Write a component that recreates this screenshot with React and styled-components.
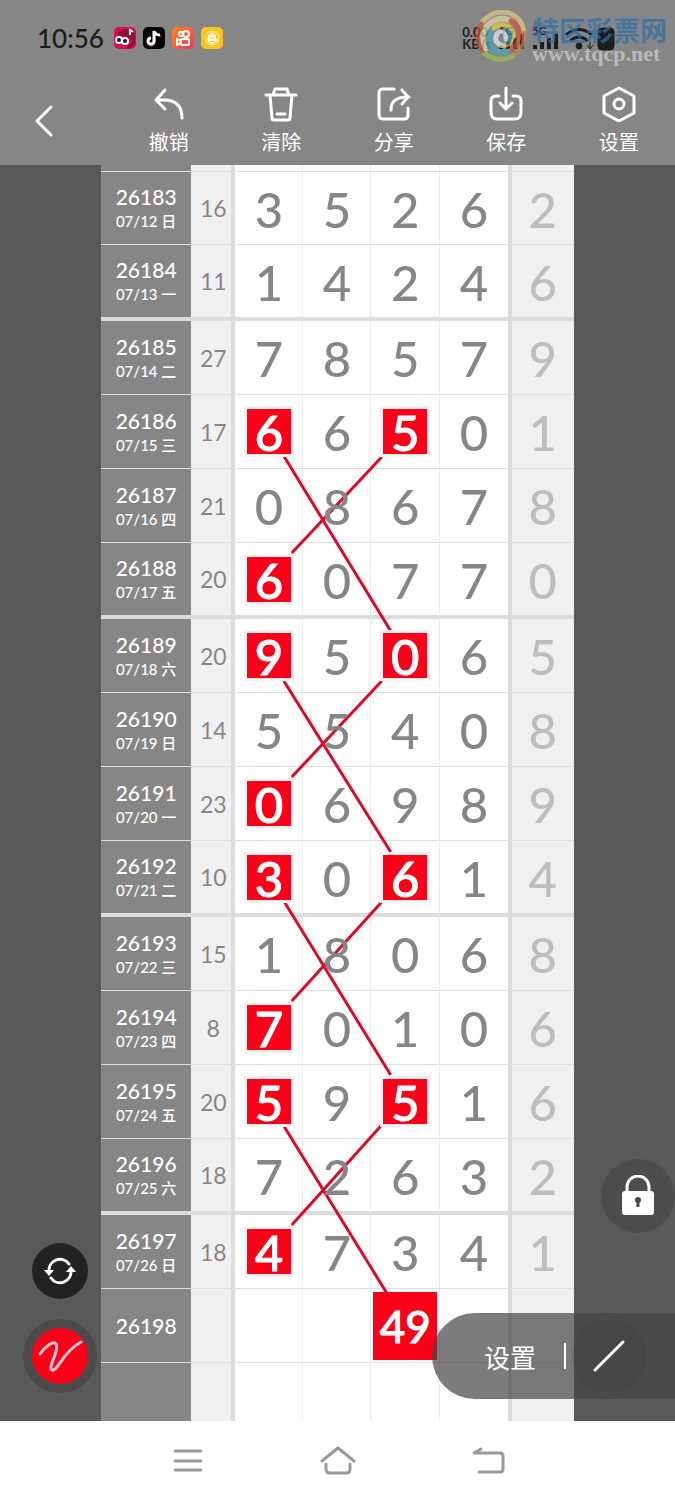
import React from "react";
import styled, { createGlobalStyle } from "styled-components";

const rows = [
  { issue: "26183", date: "07/12 日", sum: 16, nums: "3526", last: 2 },
  { issue: "26184", date: "07/13 一", sum: 11, nums: "1424", last: 6, thick: true },
  { issue: "26185", date: "07/14 二", sum: 27, nums: "7857", last: 9 },
  { issue: "26186", date: "07/15 三", sum: 17, nums: "6650", last: 1, marks: [0, 2] },
  { issue: "26187", date: "07/16 四", sum: 21, nums: "0867", last: 8 },
  { issue: "26188", date: "07/17 五", sum: 20, nums: "6077", last: 0, marks: [0], thick: true },
  { issue: "26189", date: "07/18 六", sum: 20, nums: "9506", last: 5, marks: [0, 2] },
  { issue: "26190", date: "07/19 日", sum: 14, nums: "5540", last: 8 },
  { issue: "26191", date: "07/20 一", sum: 23, nums: "0698", last: 9, marks: [0] },
  { issue: "26192", date: "07/21 二", sum: 10, nums: "3061", last: 4, marks: [0, 2], thick: true },
  { issue: "26193", date: "07/22 三", sum: 15, nums: "1806", last: 8 },
  { issue: "26194", date: "07/23 四", sum: 8, nums: "7010", last: 6, marks: [0] },
  { issue: "26195", date: "07/24 五", sum: 20, nums: "5951", last: 6, marks: [0, 2] },
  { issue: "26196", date: "07/25 六", sum: 18, nums: "7263", last: 2, thick: true },
  { issue: "26197", date: "07/26 日", sum: 18, nums: "4734", last: 1, marks: [0] },
];

// start and end of every drawn line, in board units
const lines = [
  [183, 291, 290, 466],
  [281, 292, 191, 388],
  [183, 516, 290, 687],
  [281, 516, 191, 612],
  [183, 736, 290, 910],
  [281, 737, 191, 836],
  [183, 961, 286, 1128],
  [281, 960, 191, 1060],
];

const tools = [
  {
    label: "撤销",
    icon: <path d="M13 4 4 14l9 9M4 14h8c12 0 18 6 18 18" />,
  },
  {
    label: "清除",
    icon: (
      <>
        <path d="M2 9h30M9 9l2-6h12l2 6M6 9l2 23q0 2 2 2h14q2 0 2-2l2-23" />
        <path d="M13 28h8" />
      </>
    ),
  },
  {
    label: "分享",
    icon: (
      <>
        <path d="M17 3H6q-4 0-4 4v21q0 5 4 5h21q4 0 4-4v-7" />
        <path d="M14 24c0-9 5-13 18-13M25 4l6 7-6 7" />
      </>
    ),
  },
  {
    label: "保存",
    icon: (
      <>
        <path d="M10 10H7q-5 0-5 5v11q0 7 6 7h18q6 0 6-7V15q0-5-5-5h-3" />
        <path d="M17 2v21M11 17l6 6 6-6" />
      </>
    ),
  },
  {
    label: "设置",
    icon: (
      <>
        <path d="M17 2 32 10v17l-15 8-15-8V10z" />
        <circle cx="17" cy="18" r="5" />
      </>
    ),
  },
];

const App = () => {
  return (
    <Page>
      <GlobalStyle />
      <Header>
        <StatusBar>
          <Clock>10:56</Clock>
          <AppIcons />
          <Spacer />
          <Speed>
            <span>0.00</span>
            <span>KB/s</span>
          </Speed>
          <Signals />
          <Watermark>
            <Swirl />
            <SiteName>特区彩票网</SiteName>
            <SiteUrl>www.tqcp.net</SiteUrl>
          </Watermark>
        </StatusBar>
        <Toolbar>
          <BackButton aria-label="返回">
            <svg width="20" height="34" viewBox="0 0 20 34">
              <path d="M17 3 3 17l14 14" />
            </svg>
          </BackButton>
          {tools.map((tool) => (
            <ToolButton key={tool.label}>
              <svg width="34" height="36" viewBox="0 0 34 36">
                {tool.icon}
              </svg>
              {tool.label}
            </ToolButton>
          ))}
        </Toolbar>
      </Header>

      <Board>
        <Sheet>
          <Table>
            <colgroup>
              <Col $width="19%" />
              <Col $width="9.4%" />
              <Col $width="14.4%" />
              <Col $width="14.4%" />
              <Col $width="14.5%" />
              <Col $width="15.2%" />
              <col />
            </colgroup>
            <tbody>
              <Row $height={7}>
                <IssueCell />
                <SumCell />
                {[0, 1, 2, 3].map((i) => (
                  <NumCell key={i} />
                ))}
                <LastCell />
              </Row>
              {rows.map((row, index) => (
                <Row
                  key={row.issue}
                  $height={row.thick ? 76 : index === 0 ? 73 : 74}
                  $thick={row.thick}
                >
                  <IssueCell>
                    <Issue>{row.issue}</Issue>
                    <DateText>{row.date}</DateText>
                  </IssueCell>
                  <SumCell>{row.sum}</SumCell>
                  {row.nums.split("").map((num, i) => (
                    <NumCell key={i}>
                      <Digit $marked={row.marks && row.marks.includes(i)}>
                        {num}
                      </Digit>
                    </NumCell>
                  ))}
                  <LastCell>
                    <Digit $faded>{row.last}</Digit>
                  </LastCell>
                </Row>
              ))}
              <Row $height={74}>
                <IssueCell>
                  <Issue>26198</Issue>
                </IssueCell>
                <SumCell />
                <NumCell />
                <NumCell />
                <NumCell>
                  <Guess>49</Guess>
                </NumCell>
                <NumCell />
                <LastCell />
              </Row>
              <Row $height={58} $open>
                <IssueCell />
                <SumCell />
                {[0, 1, 2, 3].map((i) => (
                  <NumCell key={i} />
                ))}
                <LastCell />
              </Row>
            </tbody>
          </Table>
          <Drawing viewBox="0 0 473 1256" preserveAspectRatio="none">
            {lines.map(([x1, y1, x2, y2]) => (
              <line key={`${x1}-${y1}`} x1={x1} y1={y1} x2={x2} y2={y2} />
            ))}
          </Drawing>
        </Sheet>

        <RefreshButton aria-label="刷新">
          <svg width="32" height="32" viewBox="0 0 32 32" fill="none" stroke="#fff" strokeWidth="3">
            <path d="M5 16A11 11 0 0 1 25 9M27 16A11 11 0 0 1 7 23" strokeLinecap="round" />
            <path d="M0 15h10l-5 6zM22 17h10l-5-6z" fill="#fff" stroke="none" />
          </svg>
        </RefreshButton>
        <PenButton aria-label="画笔">
          <svg width="46" height="34" viewBox="0 0 46 34" fill="none">
            <path
              d="M3 15C7 9 16 1 19 5c4 6-9 24-4 26 6 2 10-18 29-28"
              stroke="#ffc4cb"
              strokeWidth="3"
              strokeLinecap="round"
            />
          </svg>
        </PenButton>
        <LockButton aria-label="锁定">
          <svg width="34" height="42" viewBox="0 0 34 42">
            <path d="M6 18v-6a11 11 0 0 1 22 0v6" fill="none" stroke="#fff" strokeWidth="3" />
            <rect x="1" y="16" width="32" height="24" rx="3" fill="#fff" />
            <circle cx="17" cy="25" r="3" fill="#4a4a4a" />
            <path d="M17 26v6" stroke="#4a4a4a" strokeWidth="3" />
          </svg>
        </LockButton>
        <LinePanel>
          <PanelButton>设置</PanelButton>
          <Divider />
          <LineButton aria-label="直线">
            <svg width="34" height="34" viewBox="0 0 34 34">
              <path d="M3 31 31 3" stroke="#fff" strokeWidth="3" strokeLinecap="round" />
            </svg>
          </LineButton>
        </LinePanel>
      </Board>

      <NavBar>
        <NavButton aria-label="菜单">
          <svg width="36" height="30" viewBox="0 0 36 30">
            <path d="M5 5h26M5 15h26M5 24h26" />
          </svg>
        </NavButton>
        <NavButton aria-label="主页">
          <svg width="36" height="30" viewBox="0 0 36 30">
            <path d="M2 15 18 2l16 13M6 18v5q0 4 4 4h16q4 0 4-4v-5" />
          </svg>
        </NavButton>
        <NavButton aria-label="返回">
          <svg width="36" height="30" viewBox="0 0 36 30">
            <path d="M11 3 4 7h26q3 0 3 3v13q0 3-3 3H9" />
          </svg>
        </NavButton>
      </NavBar>
    </Page>
  );
};
export default App;

const AppIcons = () => (
  <AppIconRow>
    <svg width="22" height="22" viewBox="0 0 22 22">
      <rect width="22" height="22" rx="5" fill="#d5104a" />
      <path d="M3 8Q8-1 15 3l6 3v10q-3 6-9 6l7-9z" fill="#8e1238" />
      <path d="M16 8V3l3 2" stroke="#fff" fill="none" strokeWidth="2" />
      <circle cx="5" cy="13" r="3" fill="#2b0a16" stroke="#fff" strokeWidth="2" />
      <circle cx="11" cy="14" r="3" fill="#2b0a16" stroke="#fff" strokeWidth="2" />
    </svg>
    <svg width="22" height="22" viewBox="0 0 22 22" fill="none">
      <rect width="22" height="22" rx="5" fill="#050505" />
      <path d="M12 4v10a4 4 0 1 1-4-3M13 5q1 4 5 4" stroke="#fe2c55" strokeWidth="1" />
      <path d="M11 4v10a3 3 0 1 1-3-3M11 4q1 4 6 4" stroke="#fff" strokeWidth="3" />
    </svg>
    <svg width="22" height="22" viewBox="0 0 22 22" fill="none" stroke="#fff" strokeWidth="2">
      <defs>
        <linearGradient id="ks" x1="0" y1="0" x2="1" y2="1">
          <stop offset="0" stopColor="#ff8a1f" />
          <stop offset="1" stopColor="#ff2f55" />
        </linearGradient>
      </defs>
      <rect width="22" height="22" rx="5" fill="url(#ks)" stroke="none" />
      <circle cx="9" cy="7" r="2" />
      <circle cx="14" cy="7" r="3" />
      <rect x="9" y="12" width="8" height="6" rx="1" />
      <path d="M9 14l-4-2v6l4-2" />
    </svg>
    <svg width="22" height="22" viewBox="0 0 22 22" fill="none">
      <rect width="22" height="22" rx="5" fill="#fdc41f" />
      <circle cx="11" cy="11" r="7" stroke="#fff3b0" strokeWidth="1" />
      <path
        d="M8 12V8M10 11V6M12 11V6M14 12V8M7 11q0 5 4 5 3 0 5-4M9 13h4"
        stroke="#fff"
        strokeWidth="1.5"
        strokeLinecap="round"
      />
    </svg>
  </AppIconRow>
);

const Signals = () => (
  <SignalIcons width="116" height="26" viewBox="0 0 116 26">
    <text x="0" y="10">5G</text>
    <text x="33" y="10">5G</text>
    <path d="M2 24v-4M9 24v-7M16 24V13M23 24V9" strokeWidth="4" />
    <path d="M36 24v-4M43 24v-7M50 24V13M57 24V9" strokeWidth="4" />
    <path d="M67 10q13-11 26 0M71 16q9-8 18 0" fill="none" strokeWidth="3" />
    <circle cx="80" cy="21" r="3" />
    <path d="M91 24v-7M88 20l3 4 3-4" fill="none" strokeWidth="1" />
    <rect x="99" y="3" width="16" height="22" rx="4" />
  </SignalIcons>
);

const Swirl = () => (
  <SwirlIcon width="50" height="52" viewBox="0 0 50 52" fill="none" strokeLinecap="round">
    <path d="M6 12Q18-1 33 3q14 5 15 20" stroke="#e7c886" strokeWidth="5" />
    <path d="M48 23q1 17-13 24" stroke="#d8823c" strokeWidth="4" />
    <path d="M37 46Q22 54 8 43" stroke="#9fbd55" strokeWidth="5" />
    <path d="M6 41Q-1 27 5 14" stroke="#d0523e" strokeWidth="5" />
    <path d="M10 38Q3 25 13 14q11-9 22-3" stroke="#e8d9a4" strokeWidth="6" />
    <path d="M35 11q10 6 8 17-3 10-12 14" stroke="#d3503b" strokeWidth="5" />
    <path d="M31 42q-12 3-17-6-4-9 2-16" stroke="#4aa6bb" strokeWidth="6" />
    <path d="M18 18q7-6 15-1 6 6 3 12-4 8-12 6" stroke="#e9d24a" strokeWidth="5" />
    <path d="M25 35q-7-3-5-9 2-5 7-4 4 2 3 7" stroke="#dfeef0" strokeWidth="5" />
    <path d="M31 20q6 6 1 13" stroke="#3689ab" strokeWidth="4" />
  </SwirlIcon>
);

const GlobalStyle = createGlobalStyle`
  * {
    box-sizing: border-box;
  }

  body {
    margin: 0;
    background: #fff;
    font-family: Lato, "Noto Sans CJK SC", sans-serif;
  }

  button {
    border: 0;
    padding: 0;
    background: none;
    color: inherit;
    font: inherit;
    cursor: pointer;
  }
`;

const Page = styled.div`
  width: 100%;
`;

const Header = styled.header`
  background: #868686;
  color: #fff;
`;

const StatusBar = styled.div`
  position: relative;
  display: flex;
  align-items: center;
  height: 76px;
  padding: 0 60px 0 37px;
  color: #1c1c1c;
`;

const Clock = styled.span`
  font-size: 26px;
  font-weight: 500;
`;

const AppIconRow = styled.div`
  display: flex;
  gap: 7px;
  margin-left: 10px;
`;

const Spacer = styled.div`
  flex: 1;
`;

const Speed = styled.div`
  display: flex;
  flex-direction: column;
  margin-right: 8px;
  font-size: 13px;
  font-weight: 700;
  line-height: 12px;
`;

const SignalIcons = styled.svg`
  fill: #1c1c1c;
  stroke: #1c1c1c;

  text {
    font-size: 11px;
    font-weight: 700;
    stroke: none;
  }
`;

const Watermark = styled.div`
  position: absolute;
  top: 10px;
  right: 8px;
  display: grid;
  grid-template-columns: 50px auto;
  grid-template-rows: 34px 20px;
  column-gap: 6px;
  opacity: 0.7;
`;

const SwirlIcon = styled.svg`
  grid-row: 1 / 3;
`;

const SiteName = styled.span`
  color: #2f6ea8;
  font-size: 27px;
  font-weight: 700;
  line-height: 42px;
`;

const SiteUrl = styled.span`
  color: #d0d0d0;
  font-family: "Liberation Serif", serif;
  font-size: 22px;
  font-weight: 700;
  line-height: 20px;
`;

const Toolbar = styled.nav`
  display: grid;
  grid-template-columns: repeat(6, 1fr);
  height: 89px;

  svg {
    fill: none;
    stroke: #fff;
    stroke-width: 3;
    stroke-linecap: round;
    stroke-linejoin: round;
  }
`;

const BackButton = styled.button`
  display: flex;
  align-items: center;
  padding-left: 34px;
`;

const ToolButton = styled.button`
  display: flex;
  flex-direction: column;
  align-items: center;
  gap: 6px;
  padding-top: 10px;
  font-size: 20px;
  line-height: 28px;
`;

const Board = styled.main`
  position: relative;
  display: flex;
  justify-content: center;
  background: #595959;
`;

const Sheet = styled.div`
  position: relative;
  isolation: isolate;
  width: 70%;
`;

const Table = styled.table`
  width: 100%;
  table-layout: fixed;
  border-collapse: separate;
  border-spacing: 0;
  background: #fff;
  text-align: center;
`;

const Col = styled.col`
  width: ${(props) => props.$width};
`;

const Cell = styled.td`
  padding: 0;
  vertical-align: middle;
`;

const IssueCell = styled(Cell)`
  background: #868686;
  color: #fff;
`;

const SumCell = styled(Cell)`
  padding-left: 4px;
  background: #f0f0f0;
  border-right: 4px solid #dcdcdc;
  color: #868686;
  font-size: 23px;
`;

const LastCell = styled(Cell)`
  background: #f0f0f0;
`;

const NumCell = styled(Cell)`
  border-right: 1px solid #ececec;

  &:nth-child(6) {
    border-right: 4px solid #dcdcdc;
  }
`;

const Row = styled.tr`
  td {
    height: ${(props) => props.$height}px;
    border-bottom: ${(props) =>
      props.$open ? "0" : props.$thick ? "4px solid #dcdcdc" : "1px solid #dedede"};
  }
`;

const Issue = styled.div`
  font-size: 21px;
  font-weight: 500;
  line-height: 26px;
`;

const DateText = styled.div`
  font-size: 15px;
  font-weight: 500;
  line-height: 22px;
`;

const Digit = styled.span`
  position: relative;
  z-index: 1;
  display: block;
  width: 44px;
  height: 45px;
  margin: 0 auto;
  background: ${(props) => (props.$marked ? "#fb0019" : "none")};
  box-shadow: ${(props) => (props.$marked ? "0 0 0 3px #f8f0f0" : "none")};
  color: ${(props) => (props.$marked ? "#fff" : props.$faded ? "#bdbdbd" : "#868686")};
  font-size: 49px;
  font-weight: 500;
  line-height: 47px;
  -webkit-text-stroke: ${(props) => (props.$marked ? "1px #fff" : "0")};
`;

const Guess = styled.span`
  position: relative;
  z-index: 1;
  display: block;
  height: 68px;
  margin: 0 2px;
  background: #fb0019;
  color: #fff;
  font-size: 44px;
  font-weight: 500;
  line-height: 68px;
  -webkit-text-stroke: 1px currentColor;
`;

const Drawing = styled.svg`
  position: absolute;
  inset: 0;
  width: 100%;
  height: 100%;
  stroke: #dc0a28;
  stroke-width: 3;
  pointer-events: none;
`;

const RoundButton = styled.button`
  position: absolute;
  display: flex;
  align-items: center;
  justify-content: center;
  border-radius: 50%;
`;

const RefreshButton = styled(RoundButton)`
  left: 32px;
  bottom: 122px;
  width: 56px;
  height: 56px;
  background: #222;
`;

const PenButton = styled(RoundButton)`
  left: 23px;
  bottom: 28px;
  width: 74px;
  height: 74px;
  border: 9px solid #4b4b4b;
  background: #fb0019;
`;

const LockButton = styled(RoundButton)`
  right: 0;
  bottom: 188px;
  width: 74px;
  height: 74px;
  background: #4d4d4d;
`;

const LinePanel = styled.div`
  position: absolute;
  right: 0;
  bottom: 22px;
  z-index: 2;
  display: flex;
  align-items: center;
  width: 36%;
  height: 86px;
  padding-left: 52px;
  border-radius: 43px 0 0 43px;
  background: rgba(68, 68, 68, 0.7);
  color: #fff;
`;

const PanelButton = styled.button`
  font-size: 26px;
`;

const Divider = styled.span`
  width: 2px;
  height: 26px;
  margin: 0 6px 0 28px;
  background: #fff;
`;

const LineButton = styled.button`
  display: flex;
  align-items: center;
  justify-content: center;
  width: 74px;
  height: 74px;
  border-radius: 50%;
  background: rgba(60, 60, 60, 0.2);
`;

const NavBar = styled.nav`
  display: flex;
  justify-content: center;
  gap: 114px;
  height: 79px;
  background: #fff;
`;

const NavButton = styled.button`
  svg {
    display: block;
    fill: none;
    stroke: #999;
    stroke-width: 3;
    stroke-linecap: round;
    stroke-linejoin: round;
  }
`;
